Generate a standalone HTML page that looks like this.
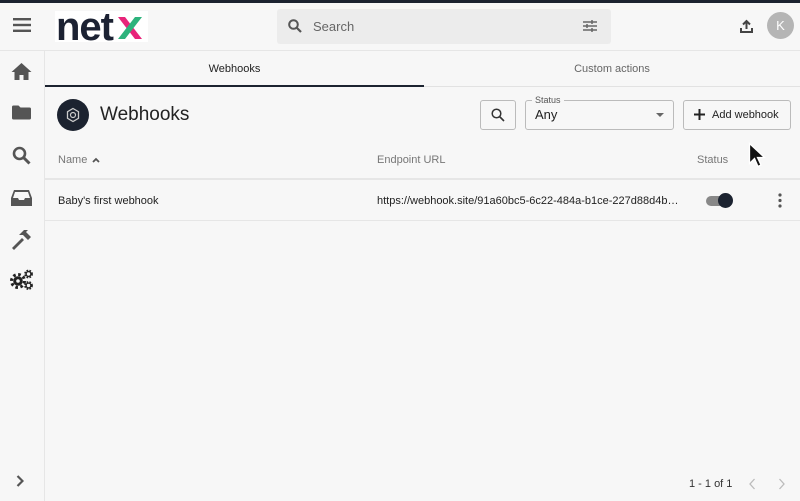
<!DOCTYPE html>
<html><head><meta charset="utf-8"><style>
*{box-sizing:border-box;margin:0;padding:0}
body{width:800px;height:501px;overflow:hidden;background:#f7f7f7;font-family:"Liberation Sans",sans-serif;color:#222;position:relative}
.a{position:absolute}
</style></head><body>
<div class="a" style="left:0;top:0;width:800px;height:3px;background:#1c2330"></div>
<div class="a" style="left:0;top:3px;width:800px;height:48px;border-bottom:1px solid #e6e6e6"></div>
<svg class="a" style="left:13px;top:18px" width="18" height="14"><rect y="0" width="18" height="2.4" fill="#555"/><rect y="5.8" width="18" height="2.4" fill="#555"/><rect y="11.6" width="18" height="2.4" fill="#555"/></svg>
<div class="a" style="left:55px;top:11px;width:93px;height:31px;background:#fff"></div>
<div class="a" style="left:56px;top:5px;font-size:40px;font-weight:bold;letter-spacing:-1px;color:#1c2233;line-height:44px">net</div>
<svg class="a" style="left:116px;top:16px" width="28" height="24"><path d="M2 1h7l17 22h-7z" fill="#e8247a"/><path d="M19 1h7L9 23H2z" fill="#2db37c"/><path d="M14 9l-4 5.5L6 9z" fill="#e8247a" opacity="0"/></svg>
<div class="a" style="left:277px;top:9px;width:334px;height:35px;background:#ececec;border-radius:3px"></div>
<svg class="a" style="left:288px;top:19px" width="14" height="14"><circle cx="5.5" cy="5.5" r="4.3" stroke="#555" stroke-width="2" fill="none"/><path d="M8.5 8.5L13 13" stroke="#555" stroke-width="2.2"/></svg>
<div class="a" style="left:313px;top:19px;font-size:13px;color:#666">Search</div>
<svg class="a" style="left:583px;top:20px" width="14" height="12"><path d="M0 2h14M0 6h14M0 10h14" stroke="#666" stroke-width="1.5"/><path d="M9 0v4M4 4v4M9 8v4" stroke="#666" stroke-width="1.5"/></svg>
<svg class="a" style="left:740px;top:19px" width="13" height="14"><path d="M6.5 10V2M3 5.5l3.5-3.5 3.5 3.5" stroke="#444" stroke-width="2" fill="none"/><path d="M1 9v4h11V9" stroke="#444" stroke-width="2" fill="none"/></svg>
<div class="a" style="left:767px;top:12px;width:27px;height:27px;border-radius:50%;background:#b5b5b5;color:#fff;font-size:13px;text-align:center;line-height:27px">K</div>
<div class="a" style="left:44px;top:51px;width:1px;height:450px;background:#e6e6e6"></div>
<svg class="a" style="left:11px;top:62px" width="21" height="18"><path d="M10.5 1L0.5 10h3v8h5v-5h4v5h5v-8h3z" fill="#555"/></svg>
<svg class="a" style="left:12px;top:105px" width="19" height="15"><path d="M0 2a1.5 1.5 0 0 1 1.5-1.5h5l2 2h9a1.5 1.5 0 0 1 1.5 1.5v9a1.5 1.5 0 0 1-1.5 1.5h-16A1.5 1.5 0 0 1 0 13z" fill="#555"/></svg>
<svg class="a" style="left:12px;top:146px" width="19" height="19"><circle cx="7.5" cy="7.5" r="5.5" stroke="#555" stroke-width="2.6" fill="none"/><path d="M11.5 11.5L17.5 17.5" stroke="#555" stroke-width="3"/></svg>
<svg class="a" style="left:11px;top:190px" width="21" height="16"><path d="M3 0h15l3 8v8H0V8zM4 2L2 8h5l1 2h5l1-2h5l-2-6z" fill="#555" fill-rule="evenodd"/></svg>
<svg class="a" style="left:11px;top:229px" width="22" height="21"><path d="M1 19l10-10 2 2L3 21z" fill="#555"/><path d="M8 6l5-5h4l-2 2 5 5-3 3-5-5z" fill="#555"/></svg>
<svg class="a" style="left:10px;top:269px" width="24" height="21">
<circle cx="8" cy="12" r="6.5" fill="none" stroke="#222" stroke-width="3" stroke-dasharray="2.6 2.5"/>
<circle cx="8" cy="12" r="4.8" fill="#222"/><circle cx="8" cy="12" r="1.8" fill="#f7f7f7"/>
<circle cx="18.5" cy="5" r="3.4" fill="none" stroke="#222" stroke-width="2" stroke-dasharray="1.6 1.2"/><circle cx="18.5" cy="5" r="2.4" fill="none" stroke="#222" stroke-width="1.4"/>
<circle cx="18.5" cy="16.5" r="3.4" fill="none" stroke="#222" stroke-width="2" stroke-dasharray="1.6 1.2"/><circle cx="18.5" cy="16.5" r="2.4" fill="none" stroke="#222" stroke-width="1.4"/></svg>
<svg class="a" style="left:16px;top:475px" width="8" height="12"><path d="M1.5 1l5 5-5 5" stroke="#555" stroke-width="2.2" fill="none"/></svg>
<div class="a" style="left:45px;top:51px;width:755px;height:36px;border-bottom:1px solid #e2e2e2"></div>
<div class="a" style="left:45px;top:85px;width:379px;height:2px;background:#1c2330"></div>
<div class="a" style="left:45px;top:63px;width:379px;text-align:center;font-size:11px;color:#222">Webhooks</div>
<div class="a" style="left:424px;top:63px;width:376px;text-align:center;font-size:11px;color:#666">Custom actions</div>
<div class="a" style="left:57px;top:99px;width:32px;height:32px;border-radius:50%;background:#1c2330"></div>
<svg class="a" style="left:65px;top:107px" width="16" height="16"><path d="M8 1.5l5.5 3.2v6.6L8 14.5 2.5 11.3V4.7z" fill="none" stroke="#ccc" stroke-width="1.3"/><circle cx="8" cy="8" r="2.5" fill="none" stroke="#ccc" stroke-width="1.2"/></svg>
<div class="a" style="left:100px;top:104px;font-size:19px;color:#222">Webhooks</div>
<div class="a" style="left:480px;top:100px;width:36px;height:30px;border:1px solid #bbb;border-radius:3px"></div>
<svg class="a" style="left:491px;top:108px" width="14" height="14"><circle cx="5.5" cy="5.5" r="4.3" stroke="#333" stroke-width="1.5" fill="none"/><path d="M8.5 8.5L13 13" stroke="#333" stroke-width="1.6"/></svg>
<div class="a" style="left:525px;top:100px;width:149px;height:30px;border:1px solid #bbb;border-radius:3px"></div>
<div class="a" style="left:532px;top:95px;padding:0 3px;background:#f7f7f7;font-size:9px;color:#555">Status</div>
<div class="a" style="left:535px;top:107px;font-size:13px;color:#222">Any</div>
<svg class="a" style="left:656px;top:113px" width="8" height="5"><path d="M0 0h8L4 4z" fill="#666"/></svg>
<div class="a" style="left:683px;top:100px;width:108px;height:30px;border:1px solid #bbb;border-radius:3px"></div>
<svg class="a" style="left:694px;top:109px" width="11" height="11"><path d="M5.5 0v11M0 5.5h11" stroke="#222" stroke-width="2"/></svg>
<div class="a" style="left:712px;top:109px;font-size:11px;color:#222">Add webhook</div>
<div class="a" style="left:58px;top:154px;font-size:11px;color:#777">Name</div>
<svg class="a" style="left:92px;top:157px" width="8" height="6"><path d="M1 5l3-3 3 3" stroke="#555" stroke-width="1.8" fill="none"/></svg>
<div class="a" style="left:377px;top:154px;font-size:11px;color:#777">Endpoint URL</div>
<div class="a" style="left:697px;top:154px;font-size:11px;color:#777">Status</div>
<div class="a" style="left:45px;top:178px;width:755px;height:2px;background:#e6e6e6"></div>
<div class="a" style="left:58px;top:195px;font-size:11px;color:#222">Baby's first webhook</div>
<div class="a" style="left:377px;top:195px;font-size:11px;color:#222">https://webhook.site/91a60bc5-6c22-484a-b1ce-227d88d4b…</div>
<div class="a" style="left:706px;top:196px;width:26px;height:10px;border-radius:5px;background:#888"></div>
<div class="a" style="left:718px;top:193px;width:15px;height:15px;border-radius:50%;background:#1c2330"></div>
<svg class="a" style="left:778px;top:193px" width="4" height="15"><circle cx="2" cy="2" r="1.6" fill="#555"/><circle cx="2" cy="7.5" r="1.6" fill="#555"/><circle cx="2" cy="13" r="1.6" fill="#555"/></svg>
<div class="a" style="left:45px;top:220px;width:755px;height:1px;background:#e6e6e6"></div>
<svg class="a" style="left:748px;top:142px" width="18" height="28"><path d="M1.5 1.5v20l5-5 3.5 8 3-1.5-3.5-7.5h7z" fill="#111" stroke="#fff" stroke-width="1.3"/></svg>
<div class="a" style="left:689px;top:478px;font-size:11px;color:#333">1 - 1 of 1</div>
<svg class="a" style="left:749px;top:478px" width="7" height="12"><path d="M5.5 1l-4.5 5 4.5 5" stroke="#bbb" stroke-width="1.3" fill="none"/></svg>
<svg class="a" style="left:778px;top:478px" width="7" height="12"><path d="M1.5 1l4.5 5-4.5 5" stroke="#bbb" stroke-width="1.3" fill="none"/></svg>
</body></html>
